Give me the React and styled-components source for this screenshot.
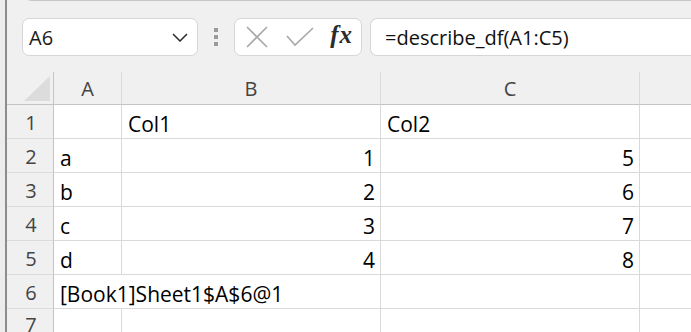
import React from "react";
import styled, { createGlobalStyle } from "styled-components";

const GlobalStyle = createGlobalStyle`
  html, body {
    margin: 0;
    padding: 0;
    background: #f0f0f0;
    overflow: hidden;
  }
  body {
    font-family: "Open Sans", "Noto Sans", sans-serif;
  }
`;

const Window = styled.div`
  width: 691px;
  height: 332px;
  display: flex;
  overflow: hidden;
  background: #f0f0f0;
`;

// the window behind, only a sliver shows
const BehindStrip = styled.div`
  width: 5px;
  flex: none;
  background: #ececec;
  border-right: 2px solid #8c8c8c;
`;

const Main = styled.div`
  flex: 1;
  display: flex;
  flex-direction: column;
  min-width: 0;
`;

const RibbonEdge = styled.div`
  height: 4px;
  margin-left: 17px;
  margin-top: -10px;
  padding-top: 10px;
  background: #f8f8f8;
  border: 1px solid #c6c6c6;
  border-top: none;
  border-right: none;
  border-radius: 0 0 0 8px;
`;

const FormulaRow = styled.div`
  display: flex;
  align-items: center;
  height: 38px;
  margin-top: 17px;
  padding-left: 15px;
`;

const Box = styled.div`
  height: 38px;
  box-sizing: border-box;
  background: #fff;
  border: 1px solid #d6d6d6;
  border-radius: 7px;
  display: flex;
  align-items: center;
`;

const NameBox = styled(Box)`
  width: 176px;
  padding: 0 9px 0 6px;
  justify-content: space-between;
  font-size: 20px;
  color: #1a1a1a;
`;

const Grip = styled.div`
  width: 36px;
  display: flex;
  flex-direction: column;
  align-items: center;
  gap: 3px;
  span {
    width: 4px;
    height: 4px;
    background: #9a9a9a;
  }
`;

const FnBox = styled(Box)`
  width: 128px;
  padding: 0 8px 0 10px;
  justify-content: space-between;
`;

const Fx = styled.span`
  font-family: "Liberation Serif", "DejaVu Serif", serif;
  font-style: italic;
  font-weight: bold;
  font-size: 25px;
  color: #2b2b2b;
  letter-spacing: 1px;
  margin-top: -4px;
`;

const FormulaBox = styled(Box)`
  flex: 1;
  margin-left: 8px;
  border-right: none;
  border-radius: 7px 0 0 7px;
  padding-left: 14px;
  font-size: 20px;
  color: #111;
`;

const Grid = styled.div`
  margin-top: 16px;
  display: grid;
  grid-template-columns: 47px 68px 259px 259px 60px;
  grid-template-rows: 33px repeat(6, 34px);
`;

const Corner = styled.div`
  border-right: 1px solid #c4c4c4;
  border-bottom: 1px solid #c4c4c4;
  position: relative;
  &::after {
    content: "";
    position: absolute;
    right: 3px;
    bottom: 3px;
    width: 0;
    height: 0;
    border-left: 26px solid transparent;
    border-bottom: 25px solid #dcdcdc;
  }
`;

const ColHead = styled.div`
  border-right: 1px solid ${(p) => (p.last ? "transparent" : "#dadada")};
  border-bottom: 1px solid #c4c4c4;
  display: flex;
  align-items: center;
  justify-content: center;
  font-size: 20px;
  color: #444;
  padding-top: 1px;
`;

const RowHead = styled.div`
  border-right: 1px solid #c4c4c4;
  border-bottom: 1px solid #dcdcdc;
  display: flex;
  align-items: center;
  justify-content: center;
  font-size: 20px;
  color: #444;
  padding: 2px 0 0 2px;
`;

const Cell = styled.div`
  grid-column: span ${(p) => p.span || 1};
  background: #fff;
  border-right: 1px solid #d9d9d9;
  border-bottom: 1px solid #d9d9d9;
  display: flex;
  align-items: flex-end;
  justify-content: ${(p) => (p.right ? "flex-end" : "flex-start")};
  padding: 0 5px 0 6px;
  font-family: "Open Sans", "Noto Sans", sans-serif;
  font-size: 21px;
  line-height: 28px;
  color: #000;
  white-space: nowrap;
  min-width: 0;
`;

const CloseIcon = () => (
  <svg width="24" height="24" viewBox="0 0 24 24">
    <path d="M2 2 L22 22 M22 2 L2 22" stroke="#a8a8a8" strokeWidth="1.6" fill="none" />
  </svg>
);

const CheckIcon = () => (
  <svg width="28" height="20" viewBox="0 0 28 20">
    <path d="M1 9 L9 18 L27 1" stroke="#a8a8a8" strokeWidth="1.6" fill="none" />
  </svg>
);

const Chevron = () => (
  <svg width="16" height="9" viewBox="0 0 16 9">
    <path d="M1 1 L8 8 L15 1" stroke="#2a2a2a" strokeWidth="1.5" fill="none" />
  </svg>
);

const rows = [
  ["", "Col1", "Col2"],
  ["a", 1, 5],
  ["b", 2, 6],
  ["c", 3, 7],
  ["d", 4, 8],
];

export default function App() {
  return (
    <Window>
      <GlobalStyle />
      <BehindStrip />
      <Main>
        <RibbonEdge />
        <FormulaRow>
          <NameBox>
            <span>A6</span>
            <Chevron />
          </NameBox>
          <Grip>
            <span />
            <span />
            <span />
          </Grip>
          <FnBox>
            <CloseIcon />
            <CheckIcon />
            <Fx>fx</Fx>
          </FnBox>
          <FormulaBox>=describe_df(A1:C5)</FormulaBox>
        </FormulaRow>
        <Grid>
          <Corner />
          <ColHead>A</ColHead>
          <ColHead>B</ColHead>
          <ColHead>C</ColHead>
          <ColHead last />
          {rows.map((r, i) => (
            <React.Fragment key={i}>
              <RowHead>{i + 1}</RowHead>
              <Cell>{r[0]}</Cell>
              <Cell right={typeof r[1] === "number"}>{r[1]}</Cell>
              <Cell right={typeof r[2] === "number"}>{r[2]}</Cell>
              <Cell />
            </React.Fragment>
          ))}
          <RowHead>6</RowHead>
          <Cell span={2}>[Book1]Sheet1$A$6@1</Cell>
          <Cell />
          <Cell />
          <RowHead>7</RowHead>
          <Cell />
          <Cell />
          <Cell />
          <Cell />
        </Grid>
      </Main>
    </Window>
  );
}
